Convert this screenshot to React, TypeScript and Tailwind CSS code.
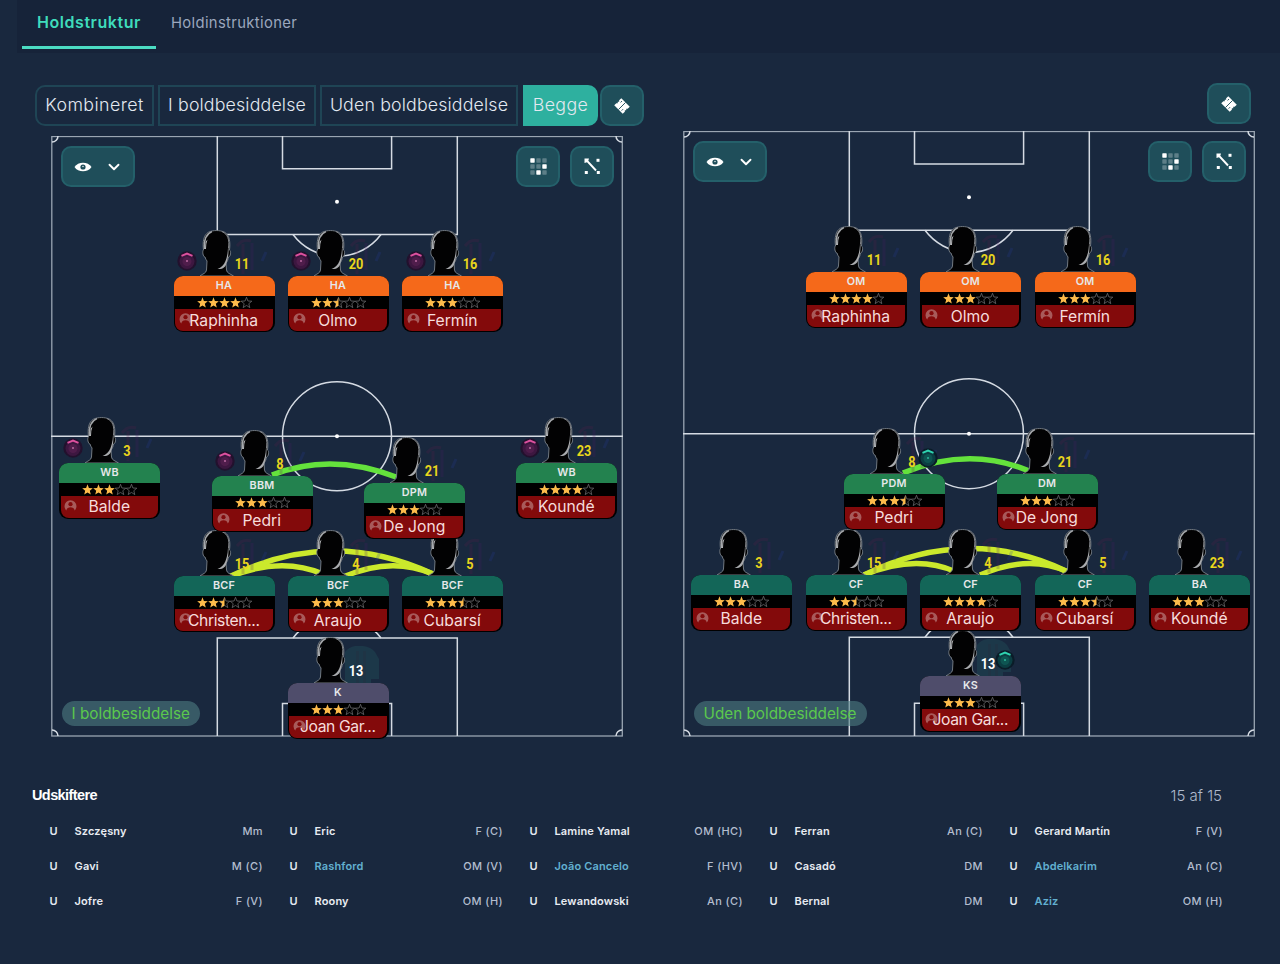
import clsx from 'clsx'
import { LuChevronDown } from 'react-icons/lu'

type Role = 'attack' | 'midfield' | 'defence' | 'keeper'
type Dot = 'pink' | 'teal'

interface IPlayer {
  name: string
  position: string
  number: number
  stars: number
  role: Role
  x: number
  y: number
  dot?: Dot
}

interface ISub {
  name: string
  position: string
  loan?: boolean
}

const roleColors: Record<Role, string> = {
  attack: 'bg-[#f5691a]',
  midfield: 'bg-[#23824f]',
  defence: 'bg-[#136658]',
  keeper: 'bg-[#4f4d6b]',
}

// deepest row first, so that the rows in front cover the heads behind them
const inPossession: IPlayer[] = [
  { name: 'Joan Gar...', position: 'K', number: 13, stars: 3, role: 'keeper', x: 236.5, y: 546.5 },
  { name: 'Christen...', position: 'BCF', number: 15, stars: 2.5, role: 'defence', x: 122.5, y: 440 },
  { name: 'Araujo', position: 'BCF', number: 4, stars: 3, role: 'defence', x: 236.5, y: 440 },
  { name: 'Cubarsí', position: 'BCF', number: 5, stars: 3.5, role: 'defence', x: 351, y: 440 },
  { name: 'Balde', position: 'WB', number: 3, stars: 3, role: 'midfield', x: 8, y: 326.5, dot: 'pink' },
  { name: 'Pedri', position: 'BBM', number: 8, stars: 3, role: 'midfield', x: 160.5, y: 340, dot: 'pink' },
  { name: 'De Jong', position: 'DPM', number: 21, stars: 3, role: 'midfield', x: 313, y: 346.5 },
  { name: 'Koundé', position: 'WB', number: 23, stars: 4, role: 'midfield', x: 465, y: 326.5, dot: 'pink' },
  { name: 'Raphinha', position: 'HA', number: 11, stars: 4, role: 'attack', x: 122.5, y: 140, dot: 'pink' },
  { name: 'Olmo', position: 'HA', number: 20, stars: 2.5, role: 'attack', x: 236.5, y: 140, dot: 'pink' },
  { name: 'Fermín', position: 'HA', number: 16, stars: 3, role: 'attack', x: 351, y: 140, dot: 'pink' },
]

const outOfPossession: IPlayer[] = [
  { name: 'Joan Gar...', position: 'KS', number: 13, stars: 3, role: 'keeper', x: 237, y: 544.5, dot: 'teal' },
  { name: 'Balde', position: 'BA', number: 3, stars: 3, role: 'defence', x: 8, y: 443.5 },
  { name: 'Christen...', position: 'CF', number: 15, stars: 2.5, role: 'defence', x: 122.5, y: 443.5 },
  { name: 'Araujo', position: 'CF', number: 4, stars: 4, role: 'defence', x: 237, y: 443.5 },
  { name: 'Cubarsí', position: 'CF', number: 5, stars: 3.5, role: 'defence', x: 351.5, y: 443.5 },
  { name: 'Koundé', position: 'BA', number: 23, stars: 3, role: 'defence', x: 466, y: 443.5 },
  { name: 'Pedri', position: 'PDM', number: 8, stars: 3.5, role: 'midfield', x: 160.5, y: 342.5, dot: 'teal' },
  { name: 'De Jong', position: 'DM', number: 21, stars: 3, role: 'midfield', x: 313.5, y: 342.5 },
  { name: 'Raphinha', position: 'OM', number: 11, stars: 4, role: 'attack', x: 122.5, y: 141 },
  { name: 'Olmo', position: 'OM', number: 20, stars: 3, role: 'attack', x: 237, y: 141 },
  { name: 'Fermín', position: 'OM', number: 16, stars: 3, role: 'attack', x: 351.5, y: 141 },
]

const inLinks = {
  green: ['M221 339 Q280 316 345 341'],
  lime: ['M178 441 Q280 390.5 382 438', 'M178 441 Q230 420 272 438', 'M292 441 Q340 420 382 438'],
}

const outLinks = {
  green: ['M220 342 Q285 315 345 339.5'],
  lime: ['M181 444 Q285 393 384 440.5', 'M181 444 Q232 423 272 440.5', 'M297 444 Q345 423 384 440.5'],
}

const subs: ISub[] = [
  { name: 'Szczęsny', position: 'Mm' },
  { name: 'Eric', position: 'F (C)' },
  { name: 'Lamine Yamal', position: 'OM (HC)' },
  { name: 'Ferran', position: 'An (C)' },
  { name: 'Gerard Martín', position: 'F (V)' },
  { name: 'Gavi', position: 'M (C)' },
  { name: 'Rashford', position: 'OM (V)', loan: true },
  { name: 'João Cancelo', position: 'F (HV)', loan: true },
  { name: 'Casadó', position: 'DM' },
  { name: 'Abdelkarim', position: 'An (C)', loan: true },
  { name: 'Jofre', position: 'F (V)' },
  { name: 'Roony', position: 'OM (H)' },
  { name: 'Lewandowski', position: 'An (C)' },
  { name: 'Bernal', position: 'DM' },
  { name: 'Aziz', position: 'OM (H)', loan: true },
]

const STAR = 'M5.5 0.3 L6.9 4 L10.8 4.2 L7.8 6.7 L8.8 10.6 L5.5 8.4 L2.2 10.6 L3.2 6.7 L0.2 4.2 L4.1 4 Z'
const HALF_STAR = 'M5.5 0.3 L5.5 8.4 L2.2 10.6 L3.2 6.7 L0.2 4.2 L4.1 4 Z'

function Stars({ value }: { value: number }) {
  return (
    <div className="flex h-[13px] items-center justify-center bg-black">
      {[0, 1, 2, 3, 4].map((i) => (
        <svg key={i} width="11" height="11" viewBox="0 0 11 11">
          {value >= i + 1 ? (
            <path d={STAR} fill="#fdbb4b" />
          ) : (
            <>
              <path d={STAR} fill="none" stroke="#77777a" strokeWidth="0.7" />
              {value > i && <path d={HALF_STAR} fill="#fdbb4b" />}
            </>
          )}
        </svg>
      ))}
    </div>
  )
}

function Head() {
  return (
    <svg className="absolute -top-[46px] left-[24px]" width="38" height="46" viewBox="0 0 38 46">
      <path
        d="M2 46 C5 43.500 8 43.500 8.500 40 L9 31 C8 30 7.500 28.500 7 27 C5 27 4 21 5.500 20 C4.500 12 5.500 5 10.500 2.200 C15 0 22 0 26.500 2.200 C31.500 5 32.500 12 31.500 20 C33.500 21 32.500 27 30.500 27 C30 29.500 29.500 31.500 28 33 L28.500 40 C29 43.500 32 43.500 35.500 46 Z"
        fill="#020203"
        stroke="#7d848c"
        strokeWidth="0.9"
      />
      <path d="M6.500 19 C5.500 8 9 3.500 14 1.600" fill="none" stroke="#a5a8ac" strokeWidth="1.400" />
      <path d="M24 1.600 C30 4 31.500 10 30.800 18" fill="none" stroke="#8b8f95" strokeWidth="1" />
      <path d="M7 19 L7.500 12 L9.500 9.500 L8.300 14 L8 19 Z" fill="#b9bbbe" />
      <path d="M30 12 C30.300 20 29.500 26 27.500 31 C26 35 23 37.500 19.500 39 C24.500 39.500 27.500 37.500 28.500 33 C30.500 28 31 20 30 12 Z" fill="#a9abae" />
    </svg>
  )
}

function Shirt({ keeper }: { keeper: boolean }) {
  return (
    <svg className="absolute -top-[38px] left-[53px]" width="42" height="38" viewBox="0 0 42 38">
      {keeper ? (
        <g fill="#22505a" opacity="0.4">
          <path d="M4 7 Q8 2 14 1 L22 1 Q30 2 34 7 L38 14 L38 34 L30 34 L30 38 L4 38 Z" />
          <path d="M15 6 H18 V38 H15 Z M22 6 H25 V38 H22 Z" fill="#2a4650" />
        </g>
      ) : (
        <g opacity="0.22" fill="none" strokeWidth="3">
          <path d="M10 8 Q16 0 24 3" stroke="#5b1f4b" />
          <path d="M16 6 V36" stroke="#5b1f4b" />
          <path d="M25 5 V32" stroke="#4a1f66" />
          <path d="M39 14 L35 23" stroke="#263a9a" />
        </g>
      )}
    </svg>
  )
}

function RoleDot({ color }: { color: Dot }) {
  const pink = color === 'pink'
  return (
    <svg
      className={clsx('absolute', pink ? '-top-[25px] left-[3.5px]' : '-top-[26px] left-[74.5px]')}
      width="20"
      height="20"
      viewBox="0 0 20 20"
    >
      <circle cx="10" cy="10" r="9.700" fill={pink ? '#22112d' : '#0a1c28'} />
      <circle cx="10" cy="10.500" r="7.500" fill={pink ? '#3d1740' : '#0b3e42'} />
      <circle cx="10" cy="10.500" r="4.500" fill={pink ? '#4f1d4b' : '#0e5552'} />
      <path d="M4.500 4.800 L10 2.500 L15.500 4.800" fill="none" stroke={pink ? '#dd519f' : '#2fd3b0'} strokeWidth="1.900" />
      <circle cx="10" cy="10" r="1" fill={pink ? '#b8689f' : '#2cb79a'} />
    </svg>
  )
}

function PersonIcon() {
  return (
    <svg className="absolute top-[3px] left-[3.5px]" width="13" height="12" viewBox="0 0 13 12">
      <path d="M2.300 11.500 A6 6 0 1 1 10.700 11.500 Q10 8.300 6.500 8.300 Q3 8.300 2.300 11.500 Z" fill="#a85a5a" />
      <circle cx="6.500" cy="5.200" r="2.100" fill="#830a0b" />
    </svg>
  )
}

function PlayerCard({ player }: { player: IPlayer }) {
  const keeper = player.role === 'keeper'
  return (
    <div className="absolute h-[56px] w-[101px]" style={{ left: player.x, top: player.y }}>
      <Shirt keeper={keeper} />
      <Head />
      <span
        className={clsx(
          'absolute -top-[22px] left-[47px] w-[42px] scale-x-[0.82] text-center font-[Roboto] text-[15.5px] leading-[20px] font-bold',
          keeper ? 'text-white' : 'text-[#e9d51c]',
        )}
      >
        {player.number}
      </span>
      {player.dot && <RoleDot color={player.dot} />}
      <div className="relative h-full overflow-hidden rounded-[9px] bg-black">
        <div
          className={clsx(
            'flex h-[20px] items-center justify-center pt-px text-[10.8px] font-semibold tracking-[0.2px] text-[#e6e8ea]',
            roleColors[player.role],
          )}
        >
          {player.position}
        </div>
        <Stars value={player.stars} />
        <div className="relative mr-[2px] ml-[1.5px] flex h-[22px] items-center justify-center rounded-b-[8px] bg-[#830a0b] pt-[1.5px] text-[15.7px] text-[#f6dcdc]">
          <PersonIcon />
          <span
            className={clsx('relative whitespace-nowrap', player.name.endsWith('...') && 'tracking-[-0.4px]')}
          >
            {player.name}
          </span>
        </div>
      </div>
    </div>
  )
}

function PitchLines() {
  return (
    <svg
      className="absolute inset-0 h-full w-full"
      viewBox="0 0 572 601"
      preserveAspectRatio="none"
      fill="none"
      stroke="#d5dbe3"
      strokeWidth="1.500"
    >
      <rect x="0.8" y="0.5" width="570.500" height="599.500" stroke="#9aa5b2" strokeWidth="1.300" />
      <path d="M166.300 0 V98.500 H406.300 V0" />
      <path d="M231.500 0 V32.800 H340.600 V0" />
      <path d="M242 98.500 A55 55 0 0 0 330 98.500" />
      <path d="M166.300 600 V502 H406.300 V600" />
      <path d="M231.500 600 V567.500 H340.600 V600" />
      <path d="M242 502 A55 55 0 0 1 330 502" />
      <path d="M0 300.200 H572" />
      <circle cx="286" cy="300.200" r="54.500" />
      <path d="M7 0 A6 6 0 0 1 1 6 M565 0 A6 6 0 0 0 571 6 M7 600 A6 6 0 0 0 1 594 M565 600 A6 6 0 0 1 571 594" />
      <circle cx="286" cy="65.700" r="2" fill="#fff" stroke="none" />
      <circle cx="286" cy="300.200" r="2" fill="#fff" stroke="none" />
    </svg>
  )
}

function Links({ green, lime }: { green: string[]; lime: string[] }) {
  return (
    <svg className="absolute inset-0 h-full w-full" fill="none" strokeWidth="5.500">
      {green.map((d) => (
        <path key={d} d={d} stroke="#64e23c" />
      ))}
      {lime.map((d) => (
        <path key={d} d={d} stroke="#cbe92c" />
      ))}
    </svg>
  )
}

const iconButton =
  'flex h-[41px] items-center justify-center rounded-[10px] border-2 border-[#24606a] bg-[#1f4e5a]'

function TicketButton() {
  return (
    <button className={clsx(iconButton, 'w-[44px]')}>
      <svg width="18" height="18" viewBox="0 0 18 18">
        <g transform="rotate(45 9 9)">
          <path d="M3 4 H15 V7 L14 8 L15 9 L14 10 L15 11 V14 H3 V11 L4 10 L3 9 L4 8 L3 7 Z" fill="#fff" />
          <path d="M9 4 V14" stroke="#1f4e5a" strokeWidth="0.9" />
          <path d="M5.500 5.500 V7.500 M12 10.500 V12.500" stroke="#1f4e5a" strokeWidth="0.9" />
        </g>
      </svg>
    </button>
  )
}

function GridIcon() {
  const lit = [0, 5, 7]
  return (
    <svg width="17" height="17" viewBox="0 0 17 17">
      {[0, 1, 2, 3, 4, 5, 6, 7, 8].map((i) => (
        <rect
          key={i}
          x={(i % 3) * 6 + 0.3}
          y={Math.floor(i / 3) * 6 + 0.3}
          width="4.400"
          height="4.400"
          rx="0.6"
          fill={lit.includes(i) ? '#fff' : '#5d7f88'}
        />
      ))}
    </svg>
  )
}

function PassIcon() {
  return (
    <svg width="17" height="17" viewBox="0 0 17 17" fill="#fff">
      <path d="M0.500 0.500 H5 L4.300 2.800 L12.700 11.800 L11.300 13.200 L3 4.300 L0.500 5 Z" />
      <rect x="12.500" y="0.800" width="3" height="3" />
      <rect x="0.800" y="13" width="3" height="3" />
      <rect x="12.800" y="13" width="3" height="3" />
    </svg>
  )
}

function Pitch({
  players,
  links,
  label,
  className,
}: {
  players: IPlayer[]
  links: { green: string[]; lime: string[] }
  label: string
  className: string
}) {
  return (
    <div className={clsx('relative w-[572px]', className)}>
      <PitchLines />
      <Links {...links} />
      {players.map((player) => (
        <PlayerCard key={player.name} player={player} />
      ))}
      <div className="relative flex gap-[10px] pt-[10px] pr-[9px] pl-[10px]">
        <button className={clsx(iconButton, 'mr-auto w-[74px] gap-[13px]')}>
          <svg width="18" height="10" viewBox="0 0 18 10">
            <path d="M0.500 5 C4 -0.800 14 -0.800 17.500 5 C14 10.800 4 10.800 0.500 5 Z" fill="#fff" />
            <circle cx="9" cy="5" r="2.600" fill="#1f4e5a" />
            <circle cx="9" cy="4.500" r="0.700" fill="#fff" />
          </svg>
          <LuChevronDown size={18} strokeWidth={2.5} className="text-white" />
        </button>
        <button className={clsx(iconButton, 'w-[44px]')}>
          <GridIcon />
        </button>
        <button className={clsx(iconButton, 'w-[44px]')}>
          <PassIcon />
        </button>
      </div>
      <span className="absolute bottom-[11px] left-[10.5px] flex h-[25px] items-center rounded-full bg-[#4d7b82]/60 px-[10px] pt-px text-[15.3px] whitespace-nowrap text-[#5bc84d]">
        {label}
      </span>
    </div>
  )
}

const toggle = 'flex h-[41px] items-center justify-center border-2 border-[#1f4555]'

export default function App() {
  return (
    <div className="h-[964px] w-[1280px] overflow-hidden bg-[#19283e] font-[Inter,sans-serif] text-[#e3e8f0]">
      <nav className="ml-[17px] flex h-[53px] items-start bg-[#162339] pl-[5px]">
        <a className="flex h-[49px] w-[134px] items-center justify-center border-b-[3px] border-[#4bdcc3] pb-[3px] text-[16px] font-semibold tracking-[0.55px] text-[#3fdcbc]">
          Holdstruktur
        </a>
        <a className="ml-[15px] flex h-[46px] items-center text-[14.8px] tracking-[0.35px] text-[#9ba7be]">
          Holdinstruktioner
        </a>
      </nav>

      <main className="flex h-[684px]">
        <section className="w-[683px] pt-[32px] pl-[35px]">
          <div className="flex text-[17.8px] font-light tracking-[0.1px]">
            <button className={clsx(toggle, 'mr-[4px] w-[119px] rounded-l-[10px] tracking-[0.45px]')}>
              Kombineret
            </button>
            <button className={clsx(toggle, 'mr-[4px] w-[158px] tracking-[0.15px]')}>I boldbesiddelse</button>
            <button className={clsx(toggle, 'mr-[5px] w-[198px] tracking-[0.15px]')}>Uden boldbesiddelse</button>
            <button className="mr-[2px] flex h-[41px] w-[75px] items-center justify-center rounded-r-[10px] bg-[#2eb09f] tracking-[0.4px]">
              Begge
            </button>
            <TicketButton />
          </div>
          <Pitch
            className="mt-[10px] ml-[16px] h-[601px]"
            players={inPossession}
            links={inLinks}
            label="I boldbesiddelse"
          />
        </section>
        <section className="w-[573px] pt-[30px]">
          <div className="flex justify-end pr-[5px]">
            <TicketButton />
          </div>
          <Pitch
            className="mt-[7px] h-[606px]"
            players={outOfPossession}
            links={outLinks}
            label="Uden boldbesiddelse"
          />
        </section>
      </main>

      <section>
        <header className="mt-[47px] flex h-[24px] items-center justify-between pr-[58px] pl-[32px]">
          <h2 className="font-['Liberation_Sans'] text-[14.5px] font-bold tracking-[-0.6px] text-white">Udskiftere</h2>
          <span className="text-[15px] font-light text-[#aeb9cc]">15 af 15</span>
        </header>
        <div className="mt-[5.5px] grid grid-cols-[repeat(5,240px)] pl-[49.5px]">
          {subs.map((sub) => (
            <div key={sub.name} className="flex h-[35.3px] items-center pr-[26.5px] text-[11px]">
              <span className="w-[25px] font-semibold">U</span>
              <span
                className={clsx('font-semibold tracking-[0.15px]', sub.loan ? 'text-[#62b0d0]' : 'text-[#e8ecf2]')}
              >
                {sub.name}
              </span>
              <span className="ml-auto font-medium tracking-[0.4px] text-[#b3bdce]">{sub.position}</span>
            </div>
          ))}
        </div>
      </section>
    </div>
  )
}
